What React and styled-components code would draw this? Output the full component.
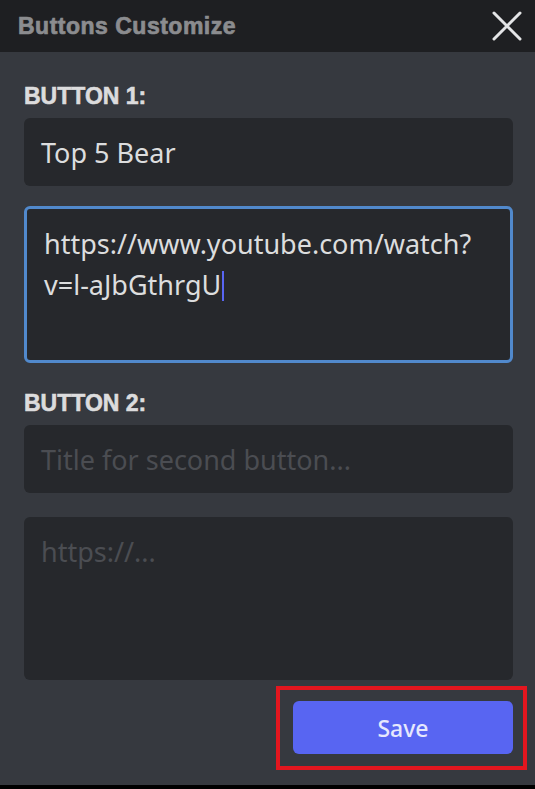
import React from "react";
import styled, { createGlobalStyle } from "styled-components";

const GlobalStyle = createGlobalStyle`
  html, body {
    margin: 0;
    padding: 0;
    background: #000;
  }
  * {
    box-sizing: border-box;
  }
`;

const Panel = styled.div`
  width: 535px;
  height: 785px;
  display: flex;
  flex-direction: column;
  background-color: #36393f;
  font-family: "Noto Sans", "Open Sans", sans-serif;
`;

const Header = styled.div`
  height: 52px;
  display: flex;
  align-items: center;
  justify-content: space-between;
  padding: 0 12px 0 18px;
  background-color: #1e1f22;
`;

const Title = styled.h1`
  margin: 0;
  font-family: "Liberation Sans", Arial, sans-serif;
  font-size: 23px;
  font-weight: 700;
  letter-spacing: 0.5px;
  color: #8b8c8f;
  -webkit-text-stroke: 0.7px #8b8c8f;
`;

const CloseButton = styled.button`
  width: 32px;
  height: 32px;
  padding: 0;
  border: none;
  background: none;
  display: flex;
  align-items: center;
  justify-content: center;
  color: #e4e5e7;
  cursor: pointer;
`;

const Body = styled.div`
  flex: 1;
  display: flex;
  flex-direction: column;
  padding: 33px 22px 0 24px;
`;

const Section = styled.div`
  display: flex;
  flex-direction: column;
  margin-bottom: ${(p) => p.$gapAfter || 0}px;
`;

const Label = styled.div`
  font-family: "Liberation Sans", Arial, sans-serif;
  font-size: 23px;
  line-height: 23px;
  font-weight: 700;
  color: #dcdcdd;
  -webkit-text-stroke: 0.6px #dcdcdd;
  margin-bottom: 10px;
`;

const Field = styled.div`
  height: ${(p) => p.$height}px;
  margin-bottom: ${(p) => p.$gapAfter || 0}px;
  display: flex;
  align-items: ${(p) => (p.$multiline ? "flex-start" : "center")};
  padding: ${(p) => (p.$multiline ? "14px 17px" : "0 17px")};
  background-color: #26282c;
  border: ${(p) => (p.$focused ? "3px solid #5189cc" : "none")};
  border-radius: 6px;
  font-size: 27px;
  line-height: ${(p) => (p.$multiline ? "41px" : "normal")};
  color: ${(p) => (p.$placeholder ? "#4b4d52" : "#dcddde")};
  overflow-wrap: anywhere;
`;

const FieldText = styled.span`
  display: block;
`;

const Caret = styled.span`
  display: inline-block;
  width: 2px;
  height: 30px;
  margin-left: 1px;
  vertical-align: -6px;
  background-color: #5865f2;
`;

const SaveRow = styled.div`
  display: flex;
  justify-content: flex-end;
  margin-top: 6px;
  margin-right: -14px;
`;

const Highlight = styled.div`
  padding: 11px 10px 12px 13px;
  border: 4px solid #e3161f;
`;

const SaveButton = styled.button`
  width: 220px;
  height: 53px;
  border: none;
  border-radius: 6px;
  background-color: #5865f2;
  color: #e6e8fd;
  font-family: "Noto Sans", "Open Sans", sans-serif;
  font-size: 23px;
  font-weight: 500;
  cursor: pointer;
`;

const CloseIcon = () => (
  <svg width="30" height="30" viewBox="0 0 30 30" fill="none">
    <path
      d="M2 2 L28 28 M28 2 L2 28"
      stroke="currentColor"
      strokeWidth="3"
      strokeLinecap="round"
    />
  </svg>
);

export default function App() {
  return (
    <>
      <GlobalStyle />
      <Panel>
        <Header>
          <Title>Buttons Customize</Title>
          <CloseButton aria-label="Close">
            <CloseIcon />
          </CloseButton>
        </Header>
        <Body>
          <Section $gapAfter={29}>
            <Label>BUTTON 1:</Label>
            <Field $height={68} $gapAfter={20}>
              Top 5 Bear
            </Field>
            <Field $height={157} $multiline $focused>
              <FieldText>
                https://www.youtube.com/watch?<wbr />v=l-aJbGthrgU
                <Caret />
              </FieldText>
            </Field>
          </Section>
          <Section>
            <Label>BUTTON 2:</Label>
            <Field $height={68} $gapAfter={24} $placeholder>
              Title for second button...
            </Field>
            <Field $height={163} $multiline $placeholder>
              <FieldText>https://...</FieldText>
            </Field>
          </Section>
          <SaveRow>
            <Highlight>
              <SaveButton>Save</SaveButton>
            </Highlight>
          </SaveRow>
        </Body>
      </Panel>
    </>
  );
}
